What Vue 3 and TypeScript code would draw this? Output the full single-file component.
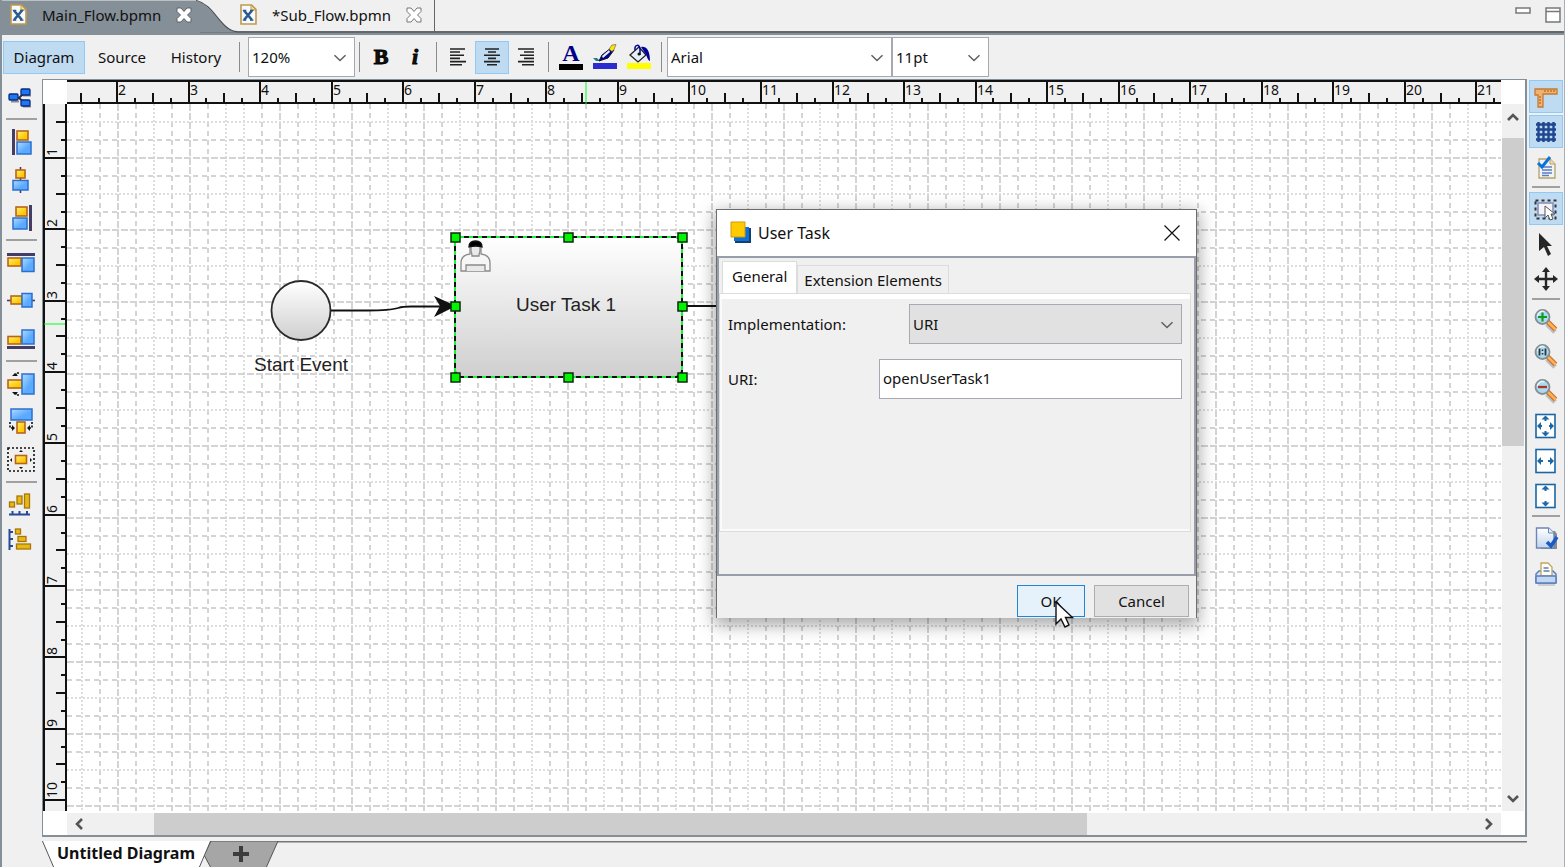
<script setup lang="ts">
import { ref } from 'vue'

interface Tick {
  pos: number
  kind: 'major' | 'half' | 'quarter'
  label: string
}

const zoom = ref('120%')
const family = ref('Arial')
const size = ref('11pt')
const implementation = ref('URI')
const uri = ref('openUserTask1')

function makeTicks(firstUnit: number, firstPos: number, step: number, count: number): Tick[] {
  const out: Tick[] = []
  for (let q = -2; q < count * 4 - 2; q++) {
    const rest = ((q % 4) + 4) % 4
    const pos = Math.round(firstPos + (q * step) / 4)
    if (rest === 0) out.push({ pos, kind: 'major', label: String(firstUnit + q / 4) })
    else out.push({ pos, kind: rest === 2 ? 'half' : 'quarter', label: '' })
  }
  return out
}

const topTicks = makeTicks(2, 49, 71.55, 20)
const leftTicks = makeTicks(1, 53, 71.35, 10)
const tickLength = { major: 24, half: 11, quarter: 6 }

function lineKind(i: number): string {
  const phase = ((i % 4) + 4) % 4
  return phase === 0 ? 'dots' : phase === 2 ? 'long' : 'short'
}

const verticals = Array.from({ length: 150 }, (_, i) => ({
  pos: 14 + i * 18,
  kind: lineKind(i > 8 ? i - 1 : i),
}))
const horizontals = Array.from({ length: 90 }, (_, i) => ({
  pos: 17 + i * 18,
  kind: lineKind(i),
}))

const handles = [
  [388, 133], [501, 133], [615, 133],
  [388, 202], [615, 202],
  [388, 273], [501, 273], [615, 273],
]
</script>

<template>
  <div class="app">
    <svg class="defs" width="0" height="0" aria-hidden="true">
      <defs>
        <linearGradient id="blue" x1="0" y1="0" x2="1" y2="1">
          <stop offset="0" stop-color="#b5dcff" />
          <stop offset="0.6" stop-color="#5aaaff" />
        </linearGradient>
        <linearGradient id="gold" x1="0" y1="0" x2="1" y2="1">
          <stop offset="0" stop-color="#fff27a" />
          <stop offset="0.7" stop-color="#ffc800" />
        </linearGradient>
        <linearGradient id="shape" x1="0" y1="0" x2="0" y2="1">
          <stop offset="0" stop-color="#ffffff" />
          <stop offset="1" stop-color="#cfcfcf" />
        </linearGradient>
        <linearGradient id="paper" x1="0" y1="0" x2="0" y2="1">
          <stop offset="0" stop-color="#ffffff" />
          <stop offset="1" stop-color="#c3d4ee" />
        </linearGradient>
      </defs>
      <symbol id="xfile" viewBox="0 0 17 21">
        <path d="M1 1h10.500l4.500 4.500v14.500h-15z" fill="#f6f9fd" stroke="#c09a4c" stroke-width="1.600" />
        <path d="M11 1v5h5z" fill="#f3dc9c" stroke="#c09a4c" />
        <path d="M4 6.500l8 9.500M12 6.500L4 16" stroke="#2c5a90" stroke-width="2.600" />
        <path d="M2.800 6.300h3.500M10 6.300h3.500M2.800 16.200h3.500M10 16.200h3.500" stroke="#2c5a90" stroke-width="1.300" />
      </symbol>
      <symbol id="cross" viewBox="0 0 16 16">
        <path d="M1 1h4l3 3.500 3-3.500h4v3.500l-3.500 3.500 3.500 3.500v3.500h-4l-3-3.500-3 3.500h-4v-3.500l3.500-3.500-3.500-3.500z" stroke-linejoin="round" />
      </symbol>
      <symbol id="chevron" viewBox="0 0 14 8">
        <path d="M1.500 1.200l5.500 5.300 5.500-5.300" fill="none" stroke="#606060" stroke-width="1.500" />
      </symbol>
      <symbol id="lens" viewBox="0 0 26 26">
        <path d="M14 16l8 8" stroke="#8d8d8d" stroke-width="5" opacity="0.500" />
        <path d="M14 13l8.500 8.500" stroke="#c9702c" stroke-width="5" />
        <path d="M14 13l8.500 8.500" stroke="#ffb254" stroke-width="2.500" />
        <circle cx="9.500" cy="9" r="7" fill="#a9dcf3" stroke="#858d93" stroke-width="1.800" />
        <path d="M4.500 8a5 5 0 0 1 7-4.200" fill="none" stroke="#e6f7ff" stroke-width="1.500" />
      </symbol>
    </svg>

    <header class="filetabs">
      <svg class="tabshape" width="240" height="32" viewBox="0 0 240 32" aria-hidden="true">
        <path d="M0 0h195c14 3 22 20 32 27q5 4 10 5H0z" fill="#858f98" />
        <path d="M196 0c14 3 21 19 31 27q5 4 10 4" fill="none" stroke="#4a4f54" stroke-width="1.200" />
      </svg>
      <button type="button" class="filetab first">
        <svg width="17" height="21"><use href="#xfile" /></svg>
        <span>Main_Flow.bpmn</span>
        <svg width="16" height="16" fill="#fff" stroke="#5e6468"><use href="#cross" /></svg>
      </button>
      <button type="button" class="filetab second">
        <svg width="17" height="21"><use href="#xfile" /></svg>
        <span>*Sub_Flow.bpmn</span>
        <svg width="16" height="16" fill="#fff" stroke="#777"><use href="#cross" /></svg>
      </button>
      <div class="windowbtns">
        <button type="button" aria-label="Minimize">
          <svg width="16" height="7"><rect x="1" y="1" width="14" height="5" fill="#fff" stroke="#787878" stroke-width="1.500" /></svg>
        </button>
        <button type="button" aria-label="Maximize">
          <svg width="16" height="16"><path d="M1 1h14v14H1zM1 4.500h14" fill="#fff" stroke="#787878" stroke-width="1.500" /></svg>
        </button>
      </div>
    </header>

    <nav class="toolbar">
      <button type="button" class="mode on">Diagram</button>
      <button type="button" class="mode">Source</button>
      <button type="button" class="mode">History</button>
      <i class="vsep"></i>
      <span class="combo zoom">
        <select v-model="zoom" aria-label="Zoom"><option>120%</option><option>100%</option></select>
        <svg width="14" height="8"><use href="#chevron" /></svg>
      </span>
      <i class="vsep"></i>
      <button type="button" class="tool bold">B</button>
      <button type="button" class="tool italic">i</button>
      <i class="vsep"></i>
      <button type="button" class="tool" aria-label="Align left">
        <svg width="18" height="18" stroke="#222" stroke-width="1.600"><path d="M1 1h15M1 4h10M1 7.200h14M1 10.400h10M1 13.600h16M1 16.800h12" /></svg>
      </button>
      <button type="button" class="tool on" aria-label="Align center">
        <svg width="18" height="18" stroke="#222" stroke-width="1.600"><path d="M2 1h14M5 4h8M1 7.200h16M5 10.400h8M1 13.600h16M4 16.800h10" /></svg>
      </button>
      <button type="button" class="tool" aria-label="Align right">
        <svg width="18" height="18" stroke="#222" stroke-width="1.600"><path d="M1 1h16M7 4h10M3 7.200h14M7 10.400h10M1 13.600h16M5 16.800h12" /></svg>
      </button>
      <i class="vsep wide"></i>
      <button type="button" class="tool ink" aria-label="Font color">
        <span>A</span>
        <i></i>
      </button>
      <button type="button" class="tool" aria-label="Line color">
        <svg width="26" height="26">
          <path d="M1 14h4l3 3H4z" fill="#1a7f8c" />
          <path d="M7 17l3-6 9-7 3 2-6 8z" fill="#00009a" stroke="#111" />
          <path d="M10 12l7-6 1 2-7 6z" fill="#e8eef8" />
          <path d="M17 5l3-4 4-.5-2 5-2 2z" fill="#ffe600" stroke="#555" stroke-width="0.600" />
          <rect x="1" y="19" width="24" height="6" fill="#2d2dcf" />
        </svg>
      </button>
      <button type="button" class="tool" aria-label="Fill color">
        <svg width="26" height="26">
          <path d="M4 11l9-8 7 8-8 7z" fill="#e6f0f4" stroke="#222" stroke-width="1.300" />
          <path d="M9 6c-1-6 5-6 5-1v6" fill="none" stroke="#00009a" stroke-width="1.500" />
          <path d="M15 3c5-1 9 3 9 14-3-1-3-6-5-8z" fill="#00009a" />
          <circle cx="13" cy="10" r="1.500" fill="#111" />
          <rect x="1" y="19" width="24" height="6" fill="#ff0" />
        </svg>
      </button>
      <i class="vsep wide"></i>
      <span class="combo family">
        <select v-model="family" aria-label="Font"><option>Arial</option></select>
        <svg width="14" height="8"><use href="#chevron" /></svg>
      </span>
      <span class="combo size">
        <select v-model="size" aria-label="Font size"><option>11pt</option></select>
        <svg width="14" height="8"><use href="#chevron" /></svg>
      </span>
    </nav>

    <div class="work">
      <aside class="left">
        <button type="button" aria-label="Auto layout">
          <svg width="26" height="26">
            <path d="M5 13h6L17 7M11 13l6 5" fill="none" stroke="#333" stroke-width="2" />
            <path d="M3 16.500h8M15 10.500h8M15 21.500h8" stroke="#8a8a8a" stroke-width="2" />
            <g stroke="#0a2a84" stroke-width="1.300"><rect x="1" y="9" width="9" height="6" rx="1" fill="#1d78f0" /><rect x="13" y="4" width="9" height="6" rx="1" fill="#1d78f0" /><rect x="13" y="15" width="9" height="6" rx="1" fill="#1d78f0" /></g>
          </svg>
        </button>
        <hr />
        <button type="button" aria-label="Align left edges">
          <svg width="28" height="28"><path d="M6.500 1v26" stroke="#443e66" stroke-width="3" /><rect x="10" y="3" width="11" height="9" fill="url(#gold)" stroke="#b8651c" stroke-width="1.600" /><path d="M10 14h14v12H10z" fill="url(#blue)" stroke="#2c6fd0" stroke-width="1.500" /></svg>
        </button>
        <button type="button" aria-label="Align centers">
          <svg width="28" height="28"><path d="M13.500 1v26" stroke="#443e66" stroke-width="1.600" /><rect x="9" y="4" width="9" height="8" fill="url(#gold)" stroke="#b8651c" stroke-width="1.600" /><rect x="6" y="14.500" width="15" height="9.500" fill="url(#blue)" stroke="#2c6fd0" stroke-width="1.500" /></svg>
        </button>
        <button type="button" aria-label="Align right edges">
          <svg width="28" height="28"><path d="M23.500 1v26" stroke="#443e66" stroke-width="3" /><rect x="9" y="3" width="11" height="9" fill="url(#gold)" stroke="#b8651c" stroke-width="1.600" /><rect x="6" y="14" width="14" height="11" fill="url(#blue)" stroke="#2c6fd0" stroke-width="1.500" /></svg>
        </button>
        <hr />
        <button type="button" aria-label="Align top edges">
          <svg width="28" height="28"><path d="M0 5.500h28" stroke="#443e66" stroke-width="3" /><rect x="1" y="9" width="13" height="8" fill="url(#gold)" stroke="#b8651c" stroke-width="1.600" /><rect x="15" y="9" width="12" height="13.500" fill="url(#blue)" stroke="#2c6fd0" stroke-width="1.500" /></svg>
        </button>
        <button type="button" aria-label="Align middles">
          <svg width="28" height="28"><path d="M0 13.500h28" stroke="#443e66" stroke-width="1.600" /><rect x="4" y="9" width="11" height="8" fill="url(#gold)" stroke="#b8651c" stroke-width="1.600" /><rect x="15" y="6.500" width="10" height="13.500" fill="url(#blue)" stroke="#2c6fd0" stroke-width="1.500" /></svg>
        </button>
        <button type="button" aria-label="Align bottom edges">
          <svg width="28" height="28"><path d="M0 22.500h28" stroke="#443e66" stroke-width="3" /><rect x="1" y="11.500" width="13" height="7.500" fill="url(#gold)" stroke="#b8651c" stroke-width="1.600" /><rect x="15" y="5" width="12" height="14" fill="url(#blue)" stroke="#2c6fd0" stroke-width="1.500" /></svg>
        </button>
        <hr />
        <button type="button" aria-label="Match height">
          <svg width="28" height="28"><rect x="1" y="10" width="14" height="8" fill="url(#gold)" stroke="#b8651c" stroke-width="1.600" /><rect x="15" y="4" width="12" height="20" fill="url(#blue)" stroke="#2c6fd0" stroke-width="1.500" /><path d="M12 3H9v4M12 25H9v-4" fill="none" stroke="#111" stroke-width="1.600" stroke-dasharray="2 1.500" /><path d="M5 6h6L8 3zM5 22h6l-3 3z" fill="#111" /></svg>
        </button>
        <button type="button" aria-label="Match width">
          <svg width="28" height="28"><rect x="4" y="1" width="21" height="11" fill="url(#blue)" stroke="#2c6fd0" stroke-width="1.500" /><rect x="10" y="14" width="8" height="11" fill="url(#gold)" stroke="#b8651c" stroke-width="1.600" /><path d="M3 14v6h3M25 14v6h-3" fill="none" stroke="#111" stroke-width="1.600" stroke-dasharray="2 1.500" /><path d="M5 17v6l3-3zM23 17v6l-3-3z" fill="#111" /></svg>
        </button>
        <button type="button" aria-label="Match size">
          <svg width="28" height="28"><rect x="1" y="2" width="26" height="23" fill="none" stroke="#111" stroke-width="1.600" stroke-dasharray="2 2" /><rect x="8.500" y="9.500" width="11" height="8" fill="url(#gold)" stroke="#b8651c" stroke-width="1.600" /><path d="M12 6h4l-2-2zM12 21h4l-2 2zM5 12v4l-2-2zM23 12v4l2-2z" fill="#111" /></svg>
        </button>
        <hr />
        <button type="button" class="low" aria-label="Distribute horizontally">
          <svg width="28" height="28"><path d="M2 24.500h21M5.500 24v-3M12.500 24v-3M20 24v-3" stroke="#26499a" stroke-width="2" /><g fill="#e6b914" stroke="#a87708" stroke-width="1.300"><rect x="2.500" y="12" width="5" height="5" /><rect x="10" y="6" width="5" height="8" /><rect x="17.500" y="4" width="5" height="14" /></g></svg>
        </button>
        <button type="button" class="low" aria-label="Distribute vertically">
          <svg width="28" height="28"><path d="M2.500 3v21M3 6h3M3 13h3M3 20h3" stroke="#26499a" stroke-width="2" /><g fill="#e6b914" stroke="#a87708" stroke-width="1.300"><rect x="8.500" y="3" width="5" height="5" /><rect x="11" y="10.500" width="8" height="5" /><rect x="9.500" y="18" width="14" height="5" /></g></svg>
        </button>
      </aside>

      <main class="center">
        <div class="editor">
          <div class="corner"></div>
          <svg class="ruler top" width="100%" height="24">
            <rect width="100%" height="24" fill="#f0f0f0" />
            <path d="M0 1h4000M0 23h4000" stroke="#111" stroke-width="2" />
            <g v-for="t in topTicks" :key="t.pos">
              <line :x1="t.pos + 1" :x2="t.pos + 1" :y1="24 - tickLength[t.kind]" y2="24" stroke="#111" stroke-width="2" />
              <text v-if="t.label" :x="t.pos + 2" y="15">{{ t.label }}</text>
            </g>
            <line x1="519" x2="519" y1="2" y2="24" stroke="#00ff21" stroke-width="1" />
          </svg>
          <div class="corner"></div>

          <svg class="ruler side" width="24" height="100%">
            <rect width="24" height="100%" fill="#f0f0f0" />
            <path d="M1 0v4000M23 0v4000" stroke="#111" stroke-width="2" />
            <g v-for="t in leftTicks" :key="t.pos">
              <line :y1="t.pos + 1" :y2="t.pos + 1" :x1="24 - tickLength[t.kind]" x2="24" stroke="#111" stroke-width="2" />
              <text v-if="t.label" :transform="`translate(14 ${t.pos - 1}) rotate(-90)`">{{ t.label }}</text>
            </g>
            <line x1="1" x2="22" y1="220" y2="220" stroke="#00ff21" stroke-width="1" />
          </svg>

          <svg class="canvas" width="100%" height="100%">
            <rect width="100%" height="100%" fill="#fff" />
            <line v-for="l in verticals" :key="'v' + l.pos" :x1="l.pos + 1" :x2="l.pos + 1" y1="0" y2="100%" :class="l.kind" />
            <line v-for="l in horizontals" :key="'h' + l.pos" :y1="l.pos + 1" :y2="l.pos + 1" x1="0" x2="100%" :class="l.kind" />
            <path d="M264 206.500h36c40 0 24-4 44-4h30" fill="none" stroke="#111" stroke-width="1.800" />
            <path d="M367 192l22 10-22 11 6-11z" fill="#111" />
            <path d="M615 202h60" stroke="#111" stroke-width="1.800" />
            <circle cx="234" cy="206.500" r="29.500" fill="url(#shape)" stroke="#2a2a2a" stroke-width="1.800" />
            <text class="node" x="234" y="267" text-anchor="middle">Start Event</text>
            <rect x="388" y="133" width="227" height="140" rx="8" fill="url(#shape)" stroke="#222" stroke-width="1.500" />
            <rect x="388" y="133" width="227" height="140" fill="none" stroke="#19f23a" stroke-width="2" />
            <rect x="388" y="133" width="227" height="140" fill="none" stroke="#111" stroke-width="2" stroke-dasharray="5 4" />
            <g fill="#ececec" stroke="#8b8b8b" stroke-width="1.300">
              <path d="M394 167v-8q0-8 9-9v-8h11v8q9 1 9 9v8z" fill="#f6f6f6" />
              <path d="M404 141h9v6q-1 3-1 5h-7q0-2-1-5zM399 167v-6h19v6" fill="#e9e9e9" />
              <path d="M402 143q0-6 6.500-6t6.500 6q-6-2-13 0z" fill="#000" stroke="#111" />
            </g>
            <text class="node" x="499" y="207" text-anchor="middle">User Task 1</text>
            <rect v-for="[x, y] in handles" :key="`${x}-${y}`" :x="x - 4" :y="y - 4" width="9" height="9" fill="#00f500" stroke="#0c2a0c" stroke-width="1.500" />
          </svg>

          <div class="vscroll">
            <svg width="14" height="10"><path d="M2 8l5-5 5 5" fill="none" stroke="#555" stroke-width="2.600" /></svg>
            <i></i>
            <svg width="14" height="10"><path d="M2 2l5 5 5-5" fill="none" stroke="#555" stroke-width="2.600" /></svg>
          </div>

          <div class="corner"></div>
          <div class="hscroll">
            <svg width="10" height="14"><path d="M8 2L3 7l5 5" fill="none" stroke="#555" stroke-width="2.600" /></svg>
            <i></i>
            <svg width="10" height="14"><path d="M2 2l5 5-5 5" fill="none" stroke="#555" stroke-width="2.600" /></svg>
          </div>
          <div class="corner"></div>
        </div>

        <footer class="sheets">
          <svg class="sheetshape" width="100%" height="26" aria-hidden="true">
            <path d="M230 0.500h4000" stroke="#777" stroke-width="2" />
            <path d="M169 0h67l-12 27h-55l-7-13z" fill="#a6a6a6" stroke="#555" />
            <path d="M0 -1l12 28h145l12-28z" fill="#fff" stroke="#555" />
          </svg>
          <button type="button" class="sheet">Untitled Diagram</button>
          <button type="button" class="add" aria-label="Add diagram">
            <svg width="16" height="16"><path d="M8 0v16M0 8h16" stroke="#3c3c3c" stroke-width="4" /></svg>
          </button>
        </footer>
      </main>

      <aside class="right">
        <button type="button" class="on" aria-label="Rulers">
          <svg width="26" height="26"><path d="M2 5h22v5H10v13H5V11H2z" fill="#f2b26b" stroke="#c57b35" stroke-width="1.300" /><path d="M12 6v2M15 6v2M18 6v2M21 6v2M6 13h2M6 16h2M6 19h2" stroke="#9c5a20" /></svg>
        </button>
        <button type="button" class="on" aria-label="Grid">
          <svg width="26" height="26" stroke="#1f4690" stroke-width="2.400"><path d="M5.500 3v20M10.500 3v20M15.500 3v20M20.500 3v20M3 5.500h20M3 10.500h20M3 15.500h20M3 20.500h20" /></svg>
        </button>
        <button type="button" aria-label="Validate">
          <svg width="26" height="26"><path d="M6 5h11l5 5v14H6z" fill="#eef4fb" stroke="#b7a265" stroke-width="1.300" /><path d="M17 5v5h5" fill="#f5deb0" stroke="#b7a265" /><path d="M9 13h10M9 16h10M9 19h10M9 21.500h7" stroke="#5d7dbd" stroke-width="1.300" /><path d="M5 9l4 4 8-10" fill="none" stroke="#0b72dc" stroke-width="3" /></svg>
        </button>
        <hr />
        <button type="button" class="on" aria-label="Select area">
          <svg width="26" height="26"><rect x="2.500" y="4.500" width="20" height="18" fill="none" stroke="#333" stroke-width="2" stroke-dasharray="3 3" /><rect x="5" y="7" width="15" height="12" fill="#f4f4f8" stroke="#8890b8" stroke-width="1.600" /><path d="M12 10v12l3-3 2 5 3-1-2-5h4z" fill="#fff" stroke="#555" /></svg>
        </button>
        <button type="button" aria-label="Pointer">
          <svg width="26" height="26"><path d="M6 2l13 13h-5l4 8-3 2-4-9-5 4z" fill="#262626" /></svg>
        </button>
        <button type="button" aria-label="Pan">
          <svg width="26" height="26"><path d="M13 4v18M4 13h18" stroke="#262626" stroke-width="2.400" /><path d="M13 1l4 5H9zM13 25l4-5H9zM1 13l5-4v8zM25 13l-5-4v8z" fill="#262626" /></svg>
        </button>
        <hr />
        <button type="button" aria-label="Zoom in">
          <svg width="26" height="26"><use href="#lens" /><path d="M5 9h9M9.500 4.500v9" stroke="#139b19" stroke-width="2.200" /></svg>
        </button>
        <button type="button" aria-label="Actual size">
          <svg width="26" height="26"><use href="#lens" /><path d="M6.500 5.500v7M12.500 5.500v7" stroke="#333" stroke-width="1.800" /><path d="M9.500 6.500v1.500M9.500 10v1.500" stroke="#333" stroke-width="1.600" /></svg>
        </button>
        <button type="button" aria-label="Zoom out">
          <svg width="26" height="26"><use href="#lens" /><path d="M5 9h9" stroke="#b03528" stroke-width="2.400" /></svg>
        </button>
        <button type="button" aria-label="Fit page">
          <svg width="26" height="26"><rect x="3" y="1.500" width="19" height="23" fill="#fff" stroke="#1a66a6" stroke-width="1.600" /><path d="M12.500 4v4M12.500 22v-4M5 13h4M20 13h-4" stroke="#1a66a6" stroke-width="2" /><path d="M12.500 2.500l4 4h-8zM12.500 23.500l4-4h-8zM4 13l4-4v8zM21 13l-4-4v8z" fill="#1a66a6" /></svg>
        </button>
        <button type="button" aria-label="Fit width">
          <svg width="26" height="26"><rect x="3" y="1.500" width="19" height="23" fill="#fff" stroke="#1a66a6" stroke-width="1.600" /><path d="M5 13h5M20 13h-5" stroke="#1a66a6" stroke-width="2" /><path d="M4 13l4-4v8zM21 13l-4-4v8z" fill="#1a66a6" /></svg>
        </button>
        <button type="button" aria-label="Fit height">
          <svg width="26" height="26"><rect x="3" y="1.500" width="19" height="23" fill="#fff" stroke="#1a66a6" stroke-width="1.600" /><path d="M12.500 4v4M12.500 22v-4" stroke="#1a66a6" stroke-width="2" /><path d="M12.500 2.500l4 4h-8zM12.500 23.500l4-4h-8z" fill="#1a66a6" /></svg>
        </button>
        <hr />
        <button type="button" aria-label="Check document">
          <svg width="26" height="26"><path d="M6 6h16l2 3v15H8z" fill="#8b8b8b" /><path d="M3.500 3h12l5.500 5v15h-17.500z" fill="url(#paper)" stroke="#6c87b5" stroke-width="1.400" /><path d="M15.500 3v5H21" fill="#e7eefa" stroke="#6c87b5" /><path d="M14 17l4 4 6-9" fill="none" stroke="#1b5cc4" stroke-width="3.600" /></svg>
        </button>
        <button type="button" aria-label="Print">
          <svg width="26" height="26"><path d="M3 14l3-3h14l3 3v9H3z" fill="#dbe7f7" stroke="#5a7fc0" stroke-width="1.500" /><path d="M8 3h7l4 4v9H8z" fill="#fffdf2" stroke="#bfa55f" stroke-width="1.300" /><path d="M10.500 8h5M10.500 11h6" stroke="#5a7fc0" stroke-width="1.300" /><rect x="3" y="16" width="20" height="7" rx="1" fill="#c3d7f1" stroke="#5a7fc0" stroke-width="1.500" /><path d="M5 25h17" stroke="#aaa" /></svg>
        </button>
      </aside>
    </div>

    <section class="dialog" role="dialog" aria-labelledby="dlgtitle">
      <header class="titlebar">
        <svg width="22" height="24"><path d="M5 7h16v15H5z" fill="#15406e" /><path d="M4 6h15v14H4z" fill="#0b71dc" /><path d="M1 1h14v15H1z" fill="#ffcb00" stroke="#d09a00" /></svg>
        <h1 id="dlgtitle">User Task</h1>
        <button type="button" aria-label="Close">
          <svg width="16" height="16"><path d="M.5.5l15 15M15.500.5l-15 15" stroke="#111" stroke-width="1.200" /></svg>
        </button>
      </header>
      <div class="content">
        <div class="tabs" role="tablist">
          <button type="button" role="tab" class="tab active" aria-selected="true">General</button>
          <button type="button" role="tab" class="tab" aria-selected="false">Extension Elements</button>
        </div>
        <div class="panel" role="tabpanel">
          <div class="row">
            <label for="impl">Implementation:</label>
            <span class="combo impl">
              <select id="impl" v-model="implementation"><option>URI</option></select>
              <svg width="14" height="8"><use href="#chevron" /></svg>
            </span>
          </div>
          <div class="row">
            <label for="uri">URI:</label>
            <input id="uri" v-model="uri" type="text" />
          </div>
        </div>
      </div>
      <div class="actions">
        <button type="button" class="ok">OK</button>
        <button type="button" class="cancel">Cancel</button>
      </div>
    </section>

    <svg class="pointer" width="20" height="28" aria-hidden="true">
      <path d="M1 1v22l5-5 4 8 4-2-3.500-7.500h7z" fill="#fff" stroke="#111" stroke-width="1.400" />
    </svg>
  </div>
</template>

<style>
body {
  margin: 0;
}
</style>

<style scoped>
.app {
  box-sizing: border-box;
  display: flex;
  flex-direction: column;
  position: relative;
  height: 100vh;
  overflow: hidden;
  background: #f0f0f0;
  border-left: 2px solid #858f98;
  border-right: 1px solid #a9afb8;
  font-family: "Noto Sans", "Open Sans", sans-serif;
  font-size: 15px;
  color: #111;
}
.app *,
.app *::before {
  box-sizing: border-box;
}
.defs {
  position: absolute;
}
button,
select,
input {
  margin: 0;
  padding: 0;
  border: 0;
  border-radius: 0;
  background: none;
  font: inherit;
  color: inherit;
}
svg {
  display: block;
  flex: none;
}
.filetabs {
  display: flex;
  position: relative;
  height: 35px;
  flex: none;
  margin-left: -2px;
  border-bottom: 2px solid #858f98;
  box-shadow: inset 0 -2px #62676b;
}
.tabshape {
  position: absolute;
  left: 0;
  top: 0;
  height: 33px;
  overflow: visible;
  background: linear-gradient(90deg, #858f98 200px, transparent 200px) 0 31px / 100% 2px no-repeat;
}
.filetab {
  display: flex;
  align-items: center;
  position: relative;
  gap: 15px;
  height: 29px;
}
.filetab.first {
  width: 228px;
  padding-left: 10px;
}
.filetab.second {
  width: 207px;
  height: 32px;
  padding: 0 0 3px 12px;
  border-right: 1px solid #666;
}
.windowbtns {
  display: flex;
  align-items: flex-start;
  gap: 14px;
  margin: 7px 3px 0 auto;
}
.toolbar {
  display: flex;
  align-items: center;
  height: 44px;
  flex: none;
  padding-left: 1px;
}
.mode {
  height: 33px;
  width: 74px;
}
.mode.on {
  width: 82px;
}
.on {
  background: #bfdbf2;
  box-shadow: inset 0 0 0 1px #90c8f6;
}
.vsep {
  width: 1px;
  height: 30px;
  margin: 0 4px;
  background: #8c8c8c;
}
.mode + .vsep {
  margin-left: 6px;
}
.vsep.wide {
  margin: 0 5px;
}
.vsep + .combo {
  margin-left: 4px;
}
.vsep.wide + .combo {
  margin-left: 0;
}
.combo {
  display: inline-flex;
  position: relative;
  height: 40px;
  border: 1px solid #a6a9b2;
  background: #fff;
}
.combo select {
  width: 100%;
  padding-left: 3px;
  appearance: none;
  outline: 0;
}
.combo svg {
  position: absolute;
  right: 7px;
  top: 16px;
  pointer-events: none;
}
.combo.zoom {
  width: 107px;
}
.combo.family {
  width: 225px;
}
.combo.size {
  width: 97px;
}
.tool {
  display: flex;
  align-items: center;
  justify-content: center;
  width: 34px;
  height: 33px;
}
.bold,
.italic {
  font-family: "Liberation Serif", serif;
  font-weight: 700;
  font-size: 22px;
  -webkit-text-stroke: 1px #000;
}
.italic {
  font-style: italic;
}
.tool.ink {
  flex-direction: column;
  justify-content: flex-end;
  padding-bottom: 4px;
}
.ink span {
  font: 700 24px/22px "Liberation Serif", serif;
  color: #00008a;
}
.ink i {
  width: 24px;
  height: 6px;
  background: #000;
}
.work {
  display: flex;
  flex: 1;
  min-height: 0;
}
.left,
.right {
  display: flex;
  flex-direction: column;
  align-items: center;
  flex: none;
  padding-top: 1px;
}
.left {
  width: 40px;
  padding-right: 2px;
}
.right {
  width: 37px;
  gap: 2px;
}
.left button,
.right button {
  display: flex;
  align-items: center;
  justify-content: center;
  width: 34px;
  height: 38px;
}
.left button:first-child,
.left .low {
  height: 36px;
}
.right button {
  height: 33px;
}
.left hr,
.right hr {
  width: 31px;
  height: 2px;
  margin: 2px 0 3px;
  border: 0;
  background: #a0a0a0;
}
.right hr {
  width: 28px;
  margin: 1px 0 2px;
}
.center {
  display: flex;
  flex-direction: column;
  flex: 1;
  min-width: 0;
}
.editor {
  display: grid;
  grid-template-columns: 24px minmax(0, 1fr) 24px;
  grid-template-rows: 24px minmax(0, 1fr) 24px;
  flex: 1;
  min-height: 0;
  border: 1px solid #858f98;
  border-right-width: 2px;
  border-bottom-width: 2px;
  background: #fff;
}
.corner {
  background: #fff;
}
.ruler text {
  font-size: 14px;
  fill: #111;
}
.canvas {
  min-height: 0;
}
.canvas line {
  stroke: #d4d4d4;
  stroke-width: 2px;
}
.canvas .dots {
  stroke-dasharray: 2 2;
  stroke: #dedede;
}
.canvas .short {
  stroke-dasharray: 5 4;
}
.canvas .long {
  stroke-dasharray: 7 2;
}
.node {
  font-family: "Liberation Sans", Arial, sans-serif;
  font-size: 19px;
  fill: #222;
}
.vscroll,
.hscroll {
  display: flex;
  align-items: center;
  justify-content: space-between;
  background: #f0f0f0;
}
.vscroll {
  flex-direction: column;
  margin: 0 1px;
  padding: 8px 0 7px;
}
.vscroll i {
  width: 22px;
  height: 44.5%;
  margin: 16px 0 auto;
  background: #cdcdcd;
}
.hscroll {
  margin-top: 2px;
  padding: 0 7px;
}
.hscroll i {
  width: 65.7%;
  height: 22px;
  margin: 0 auto 0 70px;
  background: #cdcdcd;
}
.sheets {
  display: flex;
  align-items: center;
  position: relative;
  height: 26px;
  flex: none;
  margin-top: 4px;
}
.sheetshape {
  position: absolute;
  inset: 0;
}
.sheet {
  position: relative;
  width: 168px;
  padding-bottom: 2px;
  font-size: 16px;
  font-weight: 700;
}
.add {
  position: relative;
  padding-left: 23px;
}
.dialog {
  display: flex;
  flex-direction: column;
  position: absolute;
  left: 714px;
  top: 209px;
  width: 481px;
  height: 409px;
  border: 1px solid #6d6d6d;
  border-bottom: 0;
  background: #f0f0f0;
  box-shadow: 0 5px 16px 2px rgba(0, 0, 0, 0.35);
}
.titlebar {
  display: flex;
  align-items: center;
  height: 46px;
  padding: 0 16px 0 13px;
  background: #fff;
}
.titlebar h1 {
  margin: 0 auto 0 6px;
  font-size: 16px;
  font-weight: 400;
}
.content {
  display: flex;
  flex-direction: column;
  height: 320px;
  padding: 3px 3px 42px 0;
  border: 2px solid #989ea8;
}
.tabs {
  display: flex;
  align-items: flex-end;
  height: 32px;
  padding-left: 3px;
}
.tab {
  height: 28px;
  padding: 0 6px;
  border: 1px solid #dcdcdc;
  border-bottom: 0;
}
.tab.active {
  height: 32px;
  padding: 0 9px 3px;
  background: #fff;
}
.panel {
  display: flex;
  flex-direction: column;
  gap: 15px;
  flex: 1;
  padding: 10px 8px 0;
  border: 1px solid #dcdcdc;
  box-shadow: inset 0 5px #fff, inset 2px -2px #fafafa;
}
.row {
  display: flex;
  align-items: center;
  justify-content: space-between;
}
.combo.impl {
  width: 273px;
  background: #e1e1e1;
}
.row input {
  width: 303px;
  height: 40px;
  padding: 0 3px 2px;
  border: 1px solid #a6a9b2;
  background: #fff;
  outline: 0;
}
.actions {
  display: flex;
  align-items: center;
  justify-content: flex-end;
  gap: 9px;
  padding: 9px 7px 1px;
}
.actions button {
  width: 95px;
  height: 32px;
  border: 1px solid #adadad;
  background: #e1e1e1;
}
.actions .ok {
  width: 68px;
  border-color: #1c86dc;
  background: #e5f1fb;
}
.pointer {
  position: absolute;
  left: 1053px;
  top: 601px;
}
</style>
